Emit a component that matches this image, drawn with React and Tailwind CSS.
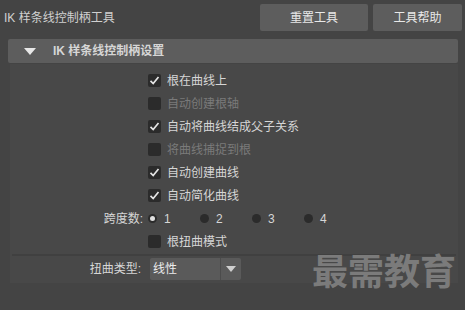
import { useState } from 'react'

const font = { fontFamily: '"Liberation Sans", "Noto Sans CJK SC", sans-serif' }

function Check({ label, checked, disabled }) {
  return (
    <div className="flex items-center h-[23px] gap-[6px]">
      <div className="w-[13px] h-[13px] rounded-[2px] bg-[#2b2b2b] flex items-center justify-center">
        {checked && (
          <svg width="11" height="11" viewBox="0 0 11 11">
            <path d="M1.5 5.8 L4.2 8.5 L9.5 2" fill="none" stroke="#e6e6e6" strokeWidth="1.7" />
          </svg>
        )}
      </div>
      <span className={disabled ? 'text-[#7a7a7a]' : 'text-[#d6d6d6]'}>{label}</span>
    </div>
  )
}

function Radio({ n, on }) {
  return (
    <div className="flex items-center gap-[7px] w-[52px]">
      <div className="w-[9px] h-[9px] rounded-full bg-[#2b2b2b] flex items-center justify-center">
        {on && <div className="w-[5px] h-[5px] rounded-full bg-[#e0e0e0]" />}
      </div>
      <span className="text-[#d6d6d6]">{n}</span>
    </div>
  )
}

export default function App() {
  const [span] = useState(1)
  return (
    <div className="w-[465px] h-[310px] bg-[#444444] text-[12px] relative overflow-hidden" style={font}>
      {/* Top bar */}
      <div className="flex items-center h-[35px] pl-[4px] pr-[3px]">
        <span className="flex-1 text-[#d0d0d0] text-[12px]">IK 样条线控制柄工具</span>
        <button className="w-[108px] h-[27px] bg-[#5d5d5d] rounded-[2px] text-[#e8e8e8] mr-[5px]">重置工具</button>
        <button className="w-[89px] h-[27px] bg-[#5d5d5d] rounded-[2px] text-[#e8e8e8]">工具帮助</button>
      </div>

      {/* Panel header */}
      <div className="ml-[8px] mr-[7px] mt-[4px] h-[24px] bg-[#5d5d5d] rounded-[2px] flex items-center">
        <svg width="12" height="7" viewBox="0 0 12 7" className="ml-[16px]">
          <path d="M0 0 L12 0 L6 7 Z" fill="#e8e8e8" />
        </svg>
        <span className="ml-[17px] text-[#d6d6d6] font-bold">IK 样条线控制柄设置</span>
      </div>

      {/* Panel body */}
      <div className="ml-[10px] mr-[7px] mt-[1px] bg-[#484848] pt-[5px] pb-[2px]">
        <div className="pl-[138px] flex flex-col">
          <Check label="根在曲线上" checked />
          <Check label="自动创建根轴" disabled />
          <Check label="自动将曲线结成父子关系" checked />
          <Check label="将曲线捕捉到根" disabled />
          <Check label="自动创建曲线" checked />
          <Check label="自动简化曲线" checked />
        </div>
        <div className="flex items-center h-[23px]">
          <span className="w-[134px] text-right text-[#d6d6d6] pr-[1px]">跨度数:</span>
          <div className="flex ml-[4px]">
            {[1, 2, 3, 4].map(n => <Radio key={n} n={n} on={n === span} />)}
          </div>
        </div>
        <div className="pl-[138px]">
          <Check label="根扭曲模式" />
        </div>
        <div className="mx-[2px] mt-[1px] h-[2px] bg-[#404040]" />
        <div className="flex items-center h-[25px]">
          <span className="w-[131px] text-right text-[#d6d6d6]">扭曲类型:</span>
          <div className="ml-[9px] flex h-[22px] bg-[#5a5a5a] rounded-[2px] w-[91px]">
            <span className="flex-1 pl-[3px] text-[#ececec] leading-[22px]">线性</span>
            <div className="w-[1px] bg-[#4c4c4c]" />
            <div className="w-[20px] flex items-center justify-center">
              <svg width="10" height="6" viewBox="0 0 10 6">
                <path d="M0 0 L10 0 L5 6 Z" fill="#cfcfcf" />
              </svg>
            </div>
          </div>
        </div>
      </div>

      {/* Watermark */}
      <div className="absolute left-[312px] top-[245px] text-[36px] leading-[48px] font-bold text-[#7b7b7b]" style={{ fontFamily: '"Noto Sans CJK SC", sans-serif' }}>最需教育</div>
    </div>
  )
}
